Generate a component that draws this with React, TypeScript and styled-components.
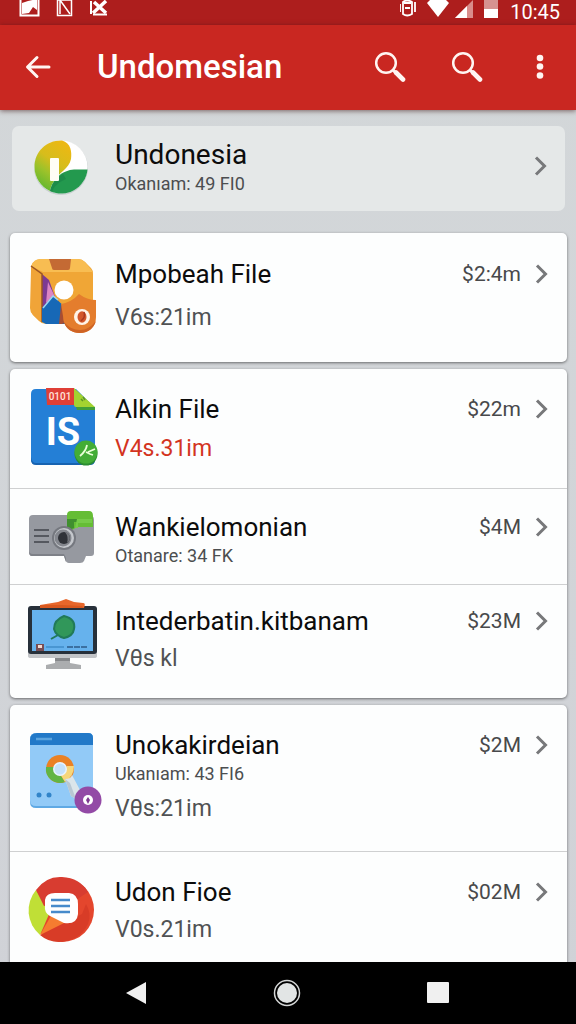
import React from 'react';
import styled, { createGlobalStyle } from 'styled-components';

const GlobalStyle = createGlobalStyle`
  *, *::before, *::after { box-sizing: border-box; }
  body {
    margin: 0;
    font-family: Roboto, 'Liberation Sans', sans-serif;
    background: #000;
  }
`;

const Screen = styled.div`
  display: flex;
  flex-direction: column;
  height: 100vh;
  background: linear-gradient(#d3d7d9, #d0d2d7);
`;

const StatusBar = styled.div`
  flex: none;
  display: flex;
  justify-content: space-between;
  height: 25px;
  padding: 0 16px 0 18px;
  background: #ad1e1d;
  color: #fff;
`;

const StatusGroup = styled.div`
  display: flex;
  gap: 10px;
`;

const Clock = styled.time`
  font-size: 20px;
  line-height: 24px;
`;

const AppBar = styled.header`
  position: relative;
  flex: none;
  display: flex;
  align-items: center;
  height: 85px;
  padding: 0 16px 2px 14px;
  background: #c92721;
  color: #fff;
  box-shadow: 0 1px 5px rgba(60, 20, 20, 0.6);
`;

const IconButton = styled.button<{ $width?: number }>`
  display: flex;
  align-items: center;
  justify-content: center;
  width: ${({ $width = 48 }) => $width}px;
  height: 48px;
  padding: 0;
  border: 0;
  background: none;
  color: inherit;
  cursor: pointer;
`;

const Title = styled.h1`
  flex: 1;
  margin: 0 0 0 35px;
  font-size: 33px;
  line-height: 40px;
  font-weight: 500;
`;

const Actions = styled.div`
  display: flex;
  gap: 29px;
`;

const Content = styled.main`
  flex: 1;
  min-height: 0;
  overflow-y: auto;
  scrollbar-width: none;
  padding: 16px 9px 0 10px;
`;

const Card = styled.ul`
  list-style: none;
  margin: 0 0 7px;
  padding: 0;
  border-radius: 5px;
  background: #fdfefe;
  box-shadow: 0 1px 3px rgba(0, 0, 0, 0.5);
`;

const FeaturedCard = styled(Card)`
  margin: 0 2px 22px;
  border-radius: 7px;
  background: #e5e8e8;
  box-shadow: none;
`;

const Item = styled.li`
  & + & { border-top: 1px solid #cfd0d1; }
`;

const RowLink = styled.a<{ $height: number; $top: number; $featured?: boolean }>`
  display: flex;
  align-items: flex-start;
  min-height: ${({ $height }) => $height}px;
  padding: ${({ $top, $featured }) => `${$top}px ${$featured ? 17 : 18}px 0 ${$featured ? 14 : 16}px`};
  color: #0c0c0c;
  text-decoration: none;
`;

const Art = styled.svg<{ $top: number }>`
  flex: none;
  width: 76px;
  height: 60px;
  margin-top: -${({ $top }) => $top}px;
  margin-right: 13px;
  overflow: visible;
`;

const Texts = styled.div`
  flex: 1;
  min-width: 0;
`;

const Name = styled.h2<{ $featured?: boolean }>`
  margin: 0;
  font-size: ${({ $featured }) => ($featured ? 28 : 26)}px;
  line-height: 32px;
  font-weight: 400;
`;

const Detail = styled.p`
  margin: 0;
  font-size: 18px;
  line-height: 26px;
  color: #4c4e50;
`;

const Version = styled.p<{ $gap: number; $alert?: boolean }>`
  margin: ${({ $gap }) => $gap}px 0 0;
  font-size: 23px;
  line-height: 32px;
  color: ${({ $alert }) => ($alert ? '#d3341f' : '#505254')};
`;

const Meta = styled.div<{ $featured?: boolean }>`
  display: flex;
  align-items: center;
  gap: 14px;
  height: ${({ $featured }) => ($featured ? 54 : 32)}px;
  font-size: 21px;
  line-height: 32px;
  color: #48494b;
`;

const NavBar = styled.nav`
  position: relative;
  flex: none;
  display: flex;
  align-items: center;
  justify-content: center;
  gap: 103px;
  height: 62px;
  padding-right: 2px;
  background: #000;
  color: #f0f0f0;
`;

const Chevron = () => (
  <svg width="14" height="22" viewBox="0 0 14 22" fill="none" stroke="#77787a" strokeWidth="3" aria-hidden="true">
    <path d="M2 2.500 10.500 11 2 19.500" />
  </svg>
);

const SearchIcon = () => (
  <svg width="32" height="32" viewBox="0 0 32 32" fill="none" stroke="#fff5f2" aria-hidden="true">
    <circle cx="12" cy="12" r="9.800" strokeWidth="2.500" />
    <path d="M19 19l3 3" strokeWidth="3" />
    <path d="M22 21.500l7 7" strokeWidth="4.600" strokeLinecap="round" />
  </svg>
);

const LeafLogo = () => (
  <>
    <defs>
      <linearGradient id="leaf" x1="0.700" y1="0" x2="0.200" y2="1">
        <stop offset="0" stopColor="#ecb813" />
        <stop offset="0.400" stopColor="#d6bd1c" />
        <stop offset="0.650" stopColor="#9cc22a" />
        <stop offset="1" stopColor="#58b52f" />
      </linearGradient>
    </defs>
    <circle cx="35" cy="42" r="27" fill="#9aa" opacity="0.400" />
    <circle cx="35" cy="41" r="26.500" fill="#fff" />
    <path d="M36 14.500C45 17 46 26 45 33c-1 5-4 8-8 12C30 51 25 58 24 65A26.500 26.500 0 0 1 8.500 41C8.500 25 21 14 36 14.500Z" fill="url(#leaf)" />
    <path d="M61.500 43.500A26.500 26.500 0 0 1 24 65C26 53 37 44 48 43.500Z" fill="#23994e" />
    <path d="M24 65c2-7 7-13 13-17l3 5C33 56 28 60 26 66Z" fill="#177d43" opacity="0.500" />
    <rect x="24" y="32" width="9" height="23" rx="1" fill="#fffef5" />
  </>
);

const BoxArt = () => (
  <>
    <path d="M5 38Q5 27 14 26h38q4 0 7 3l6 6q2 2 2 6v45q0 5-5 5H20q-4 0-7-3l-6-6q-3-3-3-7Z" fill="#f0a636" />
    <path d="M5 33Q8 26 14 26h38q4 0 7 3l8 10H17Z" fill="#f8bd52" />
    <path d="M5 33 16 41v49l-9-8q-2-3-2-6Z" fill="#f0a438" />
    <path d="M23 26h22l-1 9q0 2-2 2H28q-2 0-2-2Z" fill="#c46a34" />
    <path d="M16 41l7 6 6 17-13 13Z" fill="#7d3a92" />
    <path d="M22 49l7 15-9 6Z" fill="#dc86c3" />
    <path d="M5 33 16 41v48" fill="none" stroke="#9a5425" strokeWidth="1.500" />
    <path d="M27 63l13 12v16H20l-4-2V75Z" fill="#1768b6" />
    <path d="M17 75l10-12 5 4" fill="none" stroke="#9bd6ef" strokeWidth="1.500" />
    <circle cx="38" cy="57" r="9.500" fill="#fff" />
    <path d="M35 72 44 88l-8 3h-3Z" fill="#a84e32" />
    <path d="M53 61q8 6 17 6v17c0 10-7 16-16 16s-17-6-17-17L35 71q11-2 18-10Z" fill="#e47d2d" />
    <path d="M38 89c2 7 8 11 16 11s14-5 16-12c-5 6-10 9-16 9s-12-3-16-8Z" fill="#cf6425" />
    <circle cx="56" cy="84" r="8" fill="#fff4e8" />
    <ellipse cx="56" cy="84" rx="4.500" ry="5.800" fill="#d3572b" />
    <path d="M58 79q2 5-3 9" fill="none" stroke="#a93820" strokeWidth="1.500" />
  </>
);

const DocArt = () => (
  <>
    <path d="M5 25q0-5 5-5h40l19 19v52q0 4-5 4H10q-5 0-5-5Z" fill="#247fd6" />
    <path d="M5 88v3q0 5 5 5h54q5 0 5-5v-3q-1 6-5 6H10q-4 0-5-6Z" fill="#1763b1" />
    <path d="M20 19h28v17H21Z" fill="#df3f36" />
    <path d="M48 19 69 38H50q-2 0-2-2Z" fill="#a3d330" />
    <path d="M50 38h19v3H51Z" fill="#3f9e3a" />
    <path d="M55 30l2 2m0-4 2 3" stroke="#5b9427" strokeWidth="1.500" />
    <text x="34" y="31" textAnchor="middle" fontSize="10" fontWeight="500" fill="#ffe3dc">0101</text>
    <text x="37" y="76" textAnchor="middle" fontSize="38" fontWeight="700" fill="#fff">IS</text>
    <circle cx="60" cy="85" r="11.500" fill="#2b8d31" />
    <circle cx="60" cy="83" r="11.500" fill="#43ad36" />
    <path d="M61 76q-1 6-7 11m6-4 4 2 3 1m-5-3 7-3" fill="none" stroke="#eaffd8" strokeWidth="1.800" />
  </>
);

const CameraArt = () => (
  <>
    <path d="M3 30q0-4 4-4h56q5 0 5 5v33q0 3-3 3h-5l-2 5q-1 2-4 2H43q-3 0-4-4l-1-3H6q-3 0-3-4Z" fill="#9699a0" />
    <path d="M3 61q0 4 4 4h31l2 4v4l-2-6H6q-3 0-3-5Z" fill="#7e8188" />
    <path d="M41 26q0-4 4-4h18q4 0 4 5v11H51l-5 3-5-2Z" fill="#65bd35" />
    <path d="M41 30h24v3H48v6l-5 2-2-2Z" fill="#408f2f" />
    <path d="M51 30h15v4H52v5h-3Z" fill="#76cb49" />
    <path d="M8 41h15M8 47h15M8 53h15" stroke="#55585f" strokeWidth="2" />
    <circle cx="38" cy="49" r="12" fill="#75787f" />
    <circle cx="38" cy="49" r="10" fill="#c5c8cd" />
    <circle cx="37" cy="49" r="8.500" fill="#84878e" />
    <circle cx="38" cy="49" r="6" fill="#303339" />
    <path d="M39 43a6 6 0 0 1 2 11q2-6-2-11Z" fill="#74777d" />
  </>
);

const MonitorArt = () => (
  <>
    <path d="M29 72h15v6l11 2v4H20v-4l9-2Z" fill="#abadaf" />
    <path d="M29 72h15v4H29Z" fill="#85878a" />
    <path d="M2 66h69v5q0 2-3 2H5q-3 0-3-2Z" fill="#c3c5c8" />
    <rect x="2" y="21" width="69" height="48" rx="3" fill="#27303a" />
    <rect x="6" y="25" width="61" height="41" fill="#66b2ed" />
    <path d="M14 23v-3l18-3 8-3 8 3 9 1q3 0 1 5Z" fill="#e8672b" />
    <path d="M14 20v3h44l-2-2-20-1Z" fill="#d9591f" />
    <path d="M38 31q-10 4-10 13 2 7 10 9 9-2 10-9 2-10-10-13Z" fill="#31975a" />
    <path d="M38 31q-10 4-10 13 2 7 10 9 9-2 10-9 2-10-10-13Zm-6 19-7 4" fill="none" stroke="#217a58" strokeWidth="2" />
    <rect x="10" y="59" width="8" height="7" fill="#784d53" />
    <rect x="12" y="60" width="4" height="3" fill="#f5d9cf" />
    <path d="M20 62h18" stroke="#418cc9" strokeWidth="1.500" />
    <path d="M41 62h21" stroke="#3b70a1" strokeWidth="2" strokeDasharray="6 1" />
  </>
);

const WindowArt = () => (
  <>
    <path d="M4 35q0-7 7-7h51q5 0 5 5v66q0 4-5 4H10q-6 0-6-6Z" fill="#5fa9e4" />
    <path d="M4 34q0-6 6-6h52q5 0 5 5v64q0 4-5 4H10q-6 0-6-6Z" fill="#92caf7" />
    <path d="M4 40v-5q0-7 7-7h51q5 0 5 5v7Z" fill="#2279c8" />
    <path d="M10 34h16" stroke="#5ba4df" strokeWidth="2.500" />
    <circle cx="34" cy="64" r="14" fill="#ea8124" />
    <path d="M20 62a14 14 0 0 0 19 15l-5-8-6-7Z" fill="#62b544" />
    <path d="M48 61q0 10-9 16l-5-8 7-8Z" fill="#f6d67b" />
    <circle cx="34" cy="64" r="7" fill="#e8f3ff" />
    <circle cx="34" cy="64" r="5.500" fill="#c4e2fb" />
    <path d="M39 74q6 0 7-4l8 15-4 9-5-3Z" fill="#dbe5ea" />
    <path d="M39 74l6 17 5 3-6-16Z" fill="#b8c7d3" />
    <circle cx="13" cy="90" r="2.500" fill="#3184c9" />
    <circle cx="23" cy="90" r="2.500" fill="#3184c9" />
    <circle cx="62" cy="95" r="13.500" fill="#934aa6" />
    <circle cx="62" cy="95" r="5" fill="#fff" />
    <path d="M62 92l2 3-2 4-2-4Z" fill="#7d3791" />
  </>
);

const ChatArt = () => (
  <>
    <circle cx="36" cy="58" r="32" fill="#e4462d" />
    <path d="M10 38A32 32 0 0 0 14 83L24 60Z" fill="#c0df36" />
    <path d="M10 38Q20 24 36 25q18 1 26 15L50 48 18 54Z" fill="#d83c30" />
    <path d="M14 83 56 62 60 52q6 10 2 20-8 17-29 18-11 0-19-7Z" fill="#d83c27" />
    <path d="M14 83 26 62l18 6Z" fill="#f57c30" />
    <path d="M19 48q1-7 10-7h14q9 1 9 11v10q-1 11-14 9L24 64q-6-3-5-11Z" fill="#fff" />
    <path d="M25 48h19M25 54h19M25 60h19" stroke="#478bcb" strokeWidth="2.500" />
  </>
);

type Entry = {
  name: string;
  detail?: string;
  version?: string;
  gap?: number;
  alert?: boolean;
  size?: string;
  height: number;
  top?: number;
  featured?: boolean;
  art: React.ReactNode;
};

const featured: Entry = { name: 'Undonesia', detail: 'Okanıam: 49 FI0', height: 85, top: 13, featured: true, art: <LeafLogo /> };

const groups: Entry[][] = [
  [{ name: 'Mpobeah File', version: 'V6s:21im', gap: 12, size: '$2:4m', height: 129, top: 25, art: <BoxArt /> }],
  [
    { name: 'Alkin File', version: 'V4s.31im', gap: 8, alert: true, size: '$22m', height: 119, art: <DocArt /> },
    { name: 'Wankielomonian', detail: 'Otanare: 34 FK', size: '$4M', height: 95, top: 22, art: <CameraArt /> },
    { name: 'Intederbatin.kitbanam', version: 'Vθs kl', gap: 6, size: '$23M', height: 113, top: 20, art: <MonitorArt /> },
  ],
  [
    { name: 'Unokakirdeian', detail: 'Ukanıam: 43 FI6', version: 'Vθs:21im', gap: 6, size: '$2M', height: 146, art: <WindowArt /> },
    { name: 'Udon Fioe', version: 'V0s.21im', gap: 6, size: '$02M', height: 129, art: <ChatArt /> },
  ],
];

const Row = ({ entry }: { entry: Entry }) => {
  const { top = 24 } = entry;
  return (
    <Item>
      <RowLink href="#" $height={entry.height} $top={top} $featured={entry.featured}>
        <Art viewBox="0 0 76 60" $top={top} aria-hidden="true">{entry.art}</Art>
        <Texts>
          <Name $featured={entry.featured}>{entry.name}</Name>
          {entry.detail && <Detail>{entry.detail}</Detail>}
          {entry.version && <Version $gap={entry.gap ?? 6} $alert={entry.alert}>{entry.version}</Version>}
        </Texts>
        <Meta $featured={entry.featured}>
          {entry.size && <span>{entry.size}</span>}
          <Chevron />
        </Meta>
      </RowLink>
    </Item>
  );
};

export default function App() {
  return (
    <Screen>
      <GlobalStyle />
      <StatusBar>
        <StatusGroup aria-hidden="true">
          <svg width="92" height="18" viewBox="0 0 92 18" fill="none" stroke="#fff">
            <path d="M2.500-2v17.500h18V-2" strokeWidth="2" />
            <path d="M4 3 10 1l9-2v11l-4-3-4 6-7 1Z" fill="#fff" stroke="none" />
            <path d="M39.500-2v17.500h14V-2M39.500 0h14" strokeWidth="1.500" />
            <path d="M42 14V0l10 14" strokeWidth="1.500" />
            <path d="M73 1v13" strokeWidth="2" />
            <path d="M76 2l12 11M88 1 75 13" strokeWidth="3.500" />
            <path d="M75 14.500h14" strokeWidth="2" />
          </svg>
        </StatusGroup>
        <StatusGroup>
          <svg width="100" height="19" viewBox="0 0 100 19" aria-hidden="true">
            <path d="M3 2v12q4 3 9 0V2q-5-3-9 0ZM0 4v8m15-10v10M5 8h5M4 3h7" fill="none" stroke="#fff" strokeWidth="1.800" />
            <path d="M27 3 31-1h14l4 4-11 14Z" fill="#fff" />
            <path d="M55 18 73 0v18Z" fill="#d98d8b" />
            <path d="M55 18 67 6v12Z" fill="#fff" />
            <path d="M84 0h14v18H84Z" fill="#d69290" />
            <path d="M84 9h14v9H84Z" fill="#fff" />
          </svg>
          <Clock>10:45</Clock>
        </StatusGroup>
      </StatusBar>
      <AppBar>
        <IconButton aria-label="Back">
          <svg width="26" height="24" viewBox="0 0 26 24" fill="none" stroke="#fff5f2" strokeWidth="3" strokeLinecap="round" strokeLinejoin="round" aria-hidden="true">
            <path d="M24 12H3M12 2.500 2.500 12l9.500 9.500" />
          </svg>
        </IconButton>
        <Title>Undomesian</Title>
        <Actions>
          <IconButton aria-label="Search"><SearchIcon /></IconButton>
          <IconButton aria-label="Search files"><SearchIcon /></IconButton>
          <IconButton aria-label="More options" $width={40}>
            <svg width="8" height="26" viewBox="0 0 8 26" fill="#fff5f2" aria-hidden="true">
              <circle cx="4" cy="4" r="3.300" />
              <circle cx="4" cy="12.500" r="3.300" />
              <circle cx="4" cy="21.500" r="3.300" />
            </svg>
          </IconButton>
        </Actions>
      </AppBar>
      <Content>
        <FeaturedCard><Row entry={featured} /></FeaturedCard>
        {groups.map((group) => (
          <Card key={group[0].name}>
            {group.map((entry) => <Row key={entry.name} entry={entry} />)}
          </Card>
        ))}
      </Content>
      <NavBar aria-label="System">
        <IconButton aria-label="System back">
          <svg width="22" height="24" viewBox="0 0 22 24" fill="currentColor" aria-hidden="true"><path d="M1 12 21 1v22Z" /></svg>
        </IconButton>
        <IconButton aria-label="Home">
          <svg width="28" height="28" viewBox="0 0 28 28" aria-hidden="true">
            <circle cx="14" cy="14" r="12.500" fill="none" stroke="#d4d6d6" strokeWidth="1.500" />
            <circle cx="14" cy="14" r="10" fill="#e2e5e5" />
          </svg>
        </IconButton>
        <IconButton aria-label="Overview">
          <svg width="22" height="22" viewBox="0 0 22 22" fill="currentColor" aria-hidden="true"><rect width="22" height="21" rx="1" /></svg>
        </IconButton>
      </NavBar>
    </Screen>
  );
}
